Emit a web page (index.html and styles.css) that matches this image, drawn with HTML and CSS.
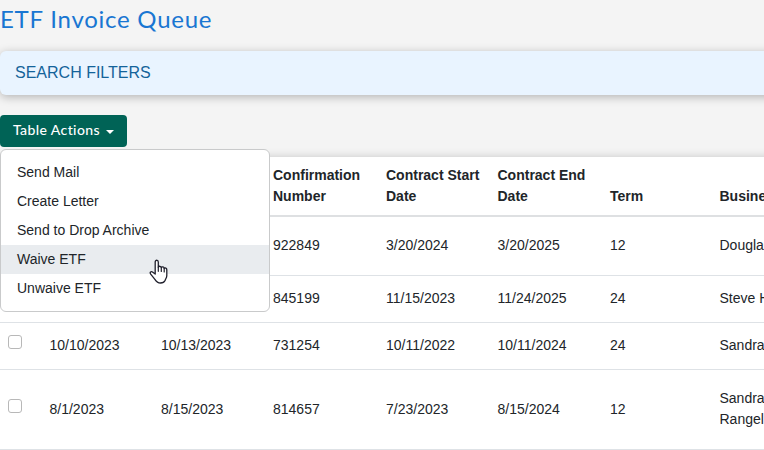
FILE: index.html
```html
<!DOCTYPE html>
<html lang="en">
<head>
<meta charset="utf-8">
<title>ETF Invoice Queue</title>
<link rel="stylesheet" href="styles.css">
</head>
<body>
<main class="page">
  <h1 class="title">ETF Invoice Queue</h1>
  <section class="filters">SEARCH FILTERS</section>
  <div class="dropdown">
    <button class="toggle" type="button"><span class="toggle-label">Table Actions</span><span class="caret"></span></button>
    <div class="menu">
      <a class="item">Send Mail</a>
      <a class="item">Create Letter</a>
      <a class="item">Send to Drop Archive</a>
      <a class="item active">Waive ETF</a>
      <a class="item">Unwaive ETF</a>
      <svg class="pointer" width="20" height="26" viewBox="0 0 20 26">
        <path d="M6.2 15V3.1C6.2.6 9.3.6 9.3 3.1V8.2C9.8 6.8 12.2 7 12.3 8.6C13 7.5 15.1 7.8 15.2 9.4C16 8.4 17.8 9 17.8 10.7V16.5C17.8 18.6 16.8 19.6 16.2 21.2C15.2 23.3 13.5 24 11.5 24C8.7 24 7.2 22.4 5.9 20.3L1.7 15.2C.3 13.1 2.2 12 3.8 13.2Z" fill="#fff" stroke="#20202c" stroke-width="1.3" stroke-linejoin="round"/>
        <path d="M9.3 8V12.3M12.3 8.6V12.5M15.2 9.4V13" fill="none" stroke="#20202c" stroke-width="1.2" stroke-linecap="round"/>
      </svg>
    </div>
  </div>
  <section class="card">
    <table class="grid">
      <colgroup><col class="c-check"><col class="c-sent"><col class="c-drop"><col class="c-conf"><col class="c-start"><col class="c-end"><col class="c-term"><col class="c-name"></colgroup>
      <thead>
        <tr><th></th><th></th><th></th><th>Confirmation Number</th><th>Contract Start Date</th><th>Contract End Date</th><th>Term</th><th>Business</th></tr>
      </thead>
      <tbody>
        <tr class="medium"><td></td><td></td><td></td><td>922849</td><td>3/20/2024</td><td>3/20/2025</td><td>12</td><td>Douglas</td></tr>
        <tr><td></td><td></td><td></td><td>845199</td><td>11/15/2023</td><td>11/24/2025</td><td>24</td><td>Steve H</td></tr>
        <tr><td><input class="check" type="checkbox"></td><td>10/10/2023</td><td>10/13/2023</td><td>731254</td><td>10/11/2022</td><td>10/11/2024</td><td>24</td><td>Sandra</td></tr>
        <tr class="tall"><td><input class="check" type="checkbox"></td><td>8/1/2023</td><td>8/15/2023</td><td>814657</td><td>7/23/2023</td><td>8/15/2024</td><td>12</td><td class="two-line">Sandra<br>Rangel</td></tr>
      </tbody>
    </table>
  </section>
</main>
</body>
</html>
```
FILE: styles.css
```css
* { box-sizing: border-box; }
body {
  margin: 0;
  background: #f4f4f4;
  color: #212529;
  font: 14px/21px "Liberation Sans", Arial, sans-serif;
}
.page { width: 764px; height: 450px; overflow: hidden; }
.title {
  height: 51px;
  margin: 0;
  padding-top: 4px;
  color: #1976d2;
  font: 400 24px/30px Lato, sans-serif;
  letter-spacing: 0.75px;
  white-space: nowrap;
}
.filters {
  width: 800px;
  height: 44px;
  padding: 0 15px;
  border-radius: 6px;
  background: #e9f4ff;
  box-shadow: 0 2px 10px rgba(0, 0, 0, .27);
  color: #14639a;
  font-size: 16px;
  line-height: 43px;
}
.dropdown { position: relative; height: 32px; margin: 20px 0 10px; }
.toggle {
  display: flex;
  align-items: center;
  gap: 6px;
  width: 127px;
  height: 32px;
  padding: 0 13px;
  border: 0;
  border-radius: 4px;
  background: #006356;
  color: #fff;
  font: 500 14px/20px Lato, sans-serif;
  letter-spacing: 0.4px;
  white-space: nowrap;
}
.toggle-label { width: 87px; padding-bottom: 2px; text-align: left; }
.caret { border: 4px solid transparent; border-top-color: #fff; border-bottom: 0; margin-top: 2px; }
.menu {
  position: absolute;
  z-index: 2;
  top: 34px;
  left: 0;
  width: 270px;
  height: 163px;
  padding: 8px 0;
  border: 1px solid #c9cacb;
  border-radius: 6px;
  background: #fff;
}
.item { display: block; padding: 4px 16px; }
.item.active { background: #e9ecef; }
.pointer { position: absolute; left: 148px; top: 109px; }
.card { width: 860px; background: #fff; box-shadow: 0 2px 10px rgba(0, 0, 0, .27); }
.grid { width: 860px; table-layout: fixed; border-collapse: separate; border-spacing: 0; }
.c-check { width: 41.5px; }
.c-sent { width: 111.5px; }
.c-drop { width: 112px; }
.c-conf { width: 113px; }
.c-start { width: 111.5px; }
.c-end { width: 112.5px; }
.c-term { width: 109.5px; }
.c-name { width: 148.5px; }
th {
  height: 60px;
  padding: 8px 4px 8px 8px;
  border-bottom: 2px solid #dee0e2;
  text-align: left;
  vertical-align: bottom;
}
td { height: 47px; padding: 0 8px 2px; border-bottom: 1px solid #dee2e6; vertical-align: middle; }
.medium td { height: 59px; }
.tall td { height: 80px; padding-bottom: 0; }
.tall .two-line { padding-bottom: 2px; }
.check {
  display: block;
  appearance: none;
  width: 14px;
  height: 14px;
  margin: 0 0 7px;
  border: 1px solid #b8b8b8;
  border-radius: 3px;
  background: #fff;
}
```
